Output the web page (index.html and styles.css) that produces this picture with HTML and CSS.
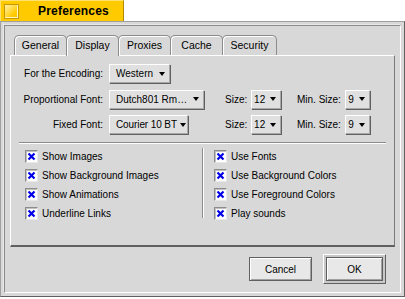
FILE: index.html
```html
<!DOCTYPE html>
<html lang="en">
<head>
    <meta charset="UTF-8">
    <title>Preferences</title>
    <link rel="stylesheet" href="styles.css">
</head>
<body>
    <div class="title-tab">
        <span class="close-box"></span>
        <span class="title">Preferences</span>
    </div>
    <div class="window">
        <div class="content">
            <div class="tabs">
                <div class="tab">General</div>
                <div class="tab active">Display</div>
                <div class="tab">Proxies</div>
                <div class="tab">Cache</div>
                <div class="tab">Security</div>
            </div>
            <div class="tab-box">
                <div class="font-grid">
                    <span class="label">For the Encoding:</span>
                    <span class="popup enc">Western<i class="arrow"></i></span>
                    <span></span>
                    <span></span>

                    <span class="label">Proportional Font:</span>
                    <span class="popup prop">Dutch801 Rm&hellip;<i class="arrow"></i></span>
                    <span class="pair">Size: <span class="popup size">12<i class="arrow"></i></span></span>
                    <span class="pair">Min. Size: <span class="popup min">9<i class="arrow"></i></span></span>

                    <span class="label">Fixed Font:</span>
                    <span class="popup fixed">Courier 10 BT<i class="arrow"></i></span>
                    <span class="pair">Size: <span class="popup size">12<i class="arrow"></i></span></span>
                    <span class="pair">Min. Size: <span class="popup min">9<i class="arrow"></i></span></span>
                </div>
                <div class="separator"></div>
                <div class="options">
                    <div class="col">
                        <label class="check"><span class="box"><svg viewBox="0 0 9 9"><path d="M1.5 1.5l6 6M7.5 1.5l-6 6"/></svg></span>Show Images</label>
                        <label class="check"><span class="box"><svg viewBox="0 0 9 9"><path d="M1.5 1.5l6 6M7.5 1.5l-6 6"/></svg></span>Show Background Images</label>
                        <label class="check"><span class="box"><svg viewBox="0 0 9 9"><path d="M1.5 1.5l6 6M7.5 1.5l-6 6"/></svg></span>Show Animations</label>
                        <label class="check"><span class="box"><svg viewBox="0 0 9 9"><path d="M1.5 1.5l6 6M7.5 1.5l-6 6"/></svg></span>Underline Links</label>
                    </div>
                    <div class="divider"></div>
                    <div class="col">
                        <label class="check"><span class="box"><svg viewBox="0 0 9 9"><path d="M1.5 1.5l6 6M7.5 1.5l-6 6"/></svg></span>Use Fonts</label>
                        <label class="check"><span class="box"><svg viewBox="0 0 9 9"><path d="M1.5 1.5l6 6M7.5 1.5l-6 6"/></svg></span>Use Background Colors</label>
                        <label class="check"><span class="box"><svg viewBox="0 0 9 9"><path d="M1.5 1.5l6 6M7.5 1.5l-6 6"/></svg></span>Use Foreground Colors</label>
                        <label class="check"><span class="box"><svg viewBox="0 0 9 9"><path d="M1.5 1.5l6 6M7.5 1.5l-6 6"/></svg></span>Play sounds</label>
                    </div>
                </div>
            </div>
            <div class="buttons">
                <span class="button cancel">Cancel</span>
                <span class="default"><span class="button ok">OK</span></span>
            </div>
        </div>
    </div>
</body>
</html>
```

FILE: styles.css
```css
* {
    margin: 0;
    padding: 0;
    box-sizing: border-box;
}

body {
    background: #fff;
    font-family: "Liberation Sans", Arial, sans-serif;
    font-size: 10px;
    color: #000;
    width: 405px;
    height: 299px;
    overflow: hidden;
}

/* yellow title tab */
.title-tab {
    width: 124px;
    height: 21px;
    background: #ffcb00;
    border-top: 1px solid #ffe070;
    border-left: 1px solid #ffe070;
    border-right: 1px solid #b08a00;
    display: flex;
    align-items: center;
}

.close-box {
    width: 15px;
    height: 15px;
    margin-left: 3px;
    border: 1px solid #c89800;
    background: linear-gradient(135deg, #fff0a8 0%, #ffcb00 70%);
    box-shadow: inset -1px -1px 0 #fff6c0;
}

.title {
    font-weight: bold;
    font-size: 12px;
    letter-spacing: 0.2px;
    margin-left: 19px;
}

/* window frame */
.window {
    width: 405px;
    height: 276px;
    border: 1px solid #a0a0a0;
    border-right-color: #606060;
    border-bottom-color: #606060;
    background: #d8d8d8;
    padding: 3px;
}

.content {
    height: 100%;
    border: 1px solid #8c8c8c;
    border-right-color: #fff;
    border-bottom-color: #fff;
    box-shadow: -1px -1px 0 #e8e8e8;
    background: #d8d8d8;
    padding: 8px 5px 0 5px;
    display: flex;
    flex-direction: column;
}

/* tabs */
.tabs {
    display: flex;
    padding-left: 4px;
    height: 21px;
    flex-shrink: 0;
    align-items: flex-end;
}

.tab {
    width: 53px;
    height: 20px;
    margin-right: -1px;
    border: 1px solid #8c8c8c;
    border-bottom: none;
    border-radius: 5px 5px 0 0;
    box-shadow: inset 1px 1px 0 #fff;
    text-align: center;
    line-height: 19px;
    font-size: 10.5px;
}

.tab.active {
    height: 21px;
    background: #d8d8d8;
    position: relative;
    z-index: 1;
    margin-bottom: -1px;
}

.tab:nth-child(5) {
    width: 55px;
}

.tab-box {
    height: 192px;
    flex-shrink: 0;
    border: 1px solid #fff;
    border-right-color: #7a7a7a;
    border-bottom-color: #606060;
    border-bottom-width: 2px;
    padding: 5px 8px 0 8px;
}

/* font popups */
.font-grid {
    display: grid;
    grid-template-columns: 90px 116px 72px auto;
    grid-auto-rows: 25.5px;
    align-items: center;
}

.label {
    text-align: right;
    padding-right: 6px;
    white-space: nowrap;
}

.pair {
    display: flex;
    align-items: center;
    gap: 4px;
    white-space: nowrap;
}

.popup {
    height: 19px;
    display: inline-flex;
    align-items: center;
    justify-content: space-between;
    padding: 0 4px 0 6px;
    background: #e0e0e0;
    border: 1px solid #a8a8a8;
    border-top-color: #fff;
    border-left-color: #fff;
    box-shadow: 1px 1px 0 #606060;
    white-space: nowrap;
    justify-self: start;
}

.popup.enc { width: 61px; }
.popup.prop { width: 95px; }
.popup.fixed { width: 79px; letter-spacing: -0.1px; }
.popup.size { width: 30px; justify-content: flex-end; gap: 2px; }
.popup.min { width: 25px; justify-content: flex-end; gap: 2px; }

.arrow {
    width: 0;
    height: 0;
    border-left: 3px solid transparent;
    border-right: 3px solid transparent;
    border-top: 4px solid #000;
    margin-left: 3px;
    flex-shrink: 0;
}

.separator {
    margin-top: 4px;
    height: 2px;
    border-top: 1px solid #8c8c8c;
    border-bottom: 1px solid #fff;
}

/* checkboxes */
.options {
    display: flex;
    padding-top: 3px;
}

.col {
    display: flex;
    flex-direction: column;
}

.col:first-child {
    width: 183px;
    padding-left: 6px;
}

.col:last-child {
    padding-left: 10px;
}

.divider {
    width: 2px;
    height: 70px;
    margin-top: 1px;
    border-left: 1px solid #8c8c8c;
    border-right: 1px solid #fff;
}

.check {
    display: flex;
    align-items: center;
    height: 19px;
    gap: 4px;
}

.box {
    width: 13px;
    height: 13px;
    padding: 1px;
    background: #fff;
    border: 1px solid #8c8c8c;
    border-right-color: #e8e8e8;
    border-bottom-color: #e8e8e8;
    box-shadow: inset 1px 1px 0 #c0c0c0;
}

.box svg {
    display: block;
    width: 9px;
    height: 9px;
    fill: none;
    stroke: #0000e8;
    stroke-width: 2.2;
}

/* buttons */
.buttons {
    display: flex;
    justify-content: flex-end;
    align-items: center;
    gap: 11px;
    padding: 7px 9px 0 0;
}

.button {
    display: inline-flex;
    align-items: center;
    justify-content: center;
    height: 24px;
    background: #e8e8e8;
    border: 1px solid #606060;
    box-shadow: inset 1px 1px 0 #fff, inset -1px -1px 0 #a0a0a0;
}

.cancel { width: 63px; }

.default {
    padding: 2px;
    border: 1px solid #606060;
    border-top-color: #fff;
    border-left-color: #fff;
    background: #c8c8c8;
}

.ok { width: 57px; }
```
